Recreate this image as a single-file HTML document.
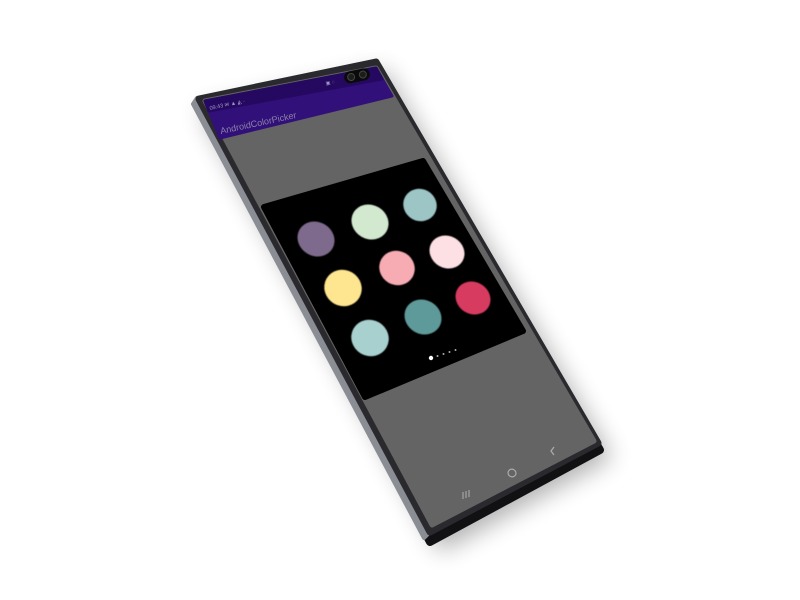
<!DOCTYPE html>
<html><head><meta charset="utf-8"><style>
html,body{margin:0;padding:0;background:#fff;width:800px;height:600px;overflow:hidden}
svg{display:block}
text{font-family:"Liberation Sans",sans-serif}
</style></head><body>
<svg width="800" height="600" viewBox="0 0 800 600" xmlns="http://www.w3.org/2000/svg">
<defs>
<filter id="sh" x="-30%" y="-30%" width="160%" height="160%"><feGaussianBlur stdDeviation="12"/></filter>
<filter id="b1"><feGaussianBlur stdDeviation="0.5"/></filter>
</defs>
<path d="M200,110 L385,70 L612,458 L440,552 Z" fill="#000" opacity="0.3" filter="url(#sh)"/>
<!-- body bottom thickness -->
<path d="M196,104 L376,64 L600,450 L430,542 Z" fill="#111113" stroke="#111113" stroke-width="8" stroke-linejoin="round"/>
<!-- side silver -->
<path d="M193,104 L197,98 L428,534 L424,538 Z" fill="#8a8d93" stroke="#8a8d93" stroke-width="4" stroke-linejoin="round"/>
<!-- front frame -->
<path d="M199,99 L376,62 L598,443 L430,532 Z" fill="#2a2a2e" stroke="#2a2a2e" stroke-width="7" stroke-linejoin="round"/>
<!-- screen -->
<path d="M205,101 L376,68 L594,441 L432,525 Z" fill="#646464" stroke="#646464" stroke-width="5" stroke-linejoin="round"/>
<!-- app bar -->
<path d="M205,101 L376,68 L392,96 L220,138 Z" fill="#32107a" stroke="#32107a" stroke-width="3" stroke-linejoin="round"/>
<path d="M205,101 L376,68 L382,79 L209,111 Z" fill="#250860" stroke="#250860" stroke-width="3" stroke-linejoin="round"/>
<g transform="rotate(-12 356 76)">
<rect x="344" y="70" width="26" height="12" rx="6" fill="#0a0a0a"/>
<circle cx="351" cy="76" r="3.5" fill="#1c1c1c" stroke="#444" stroke-width="1"/>
<circle cx="363" cy="76" r="3.5" fill="#1c1c1c" stroke="#444" stroke-width="1"/>
</g>
<text x="210" y="110" font-size="5.5" fill="#a098c0" transform="rotate(-12 210 110)">09:43 ✉ ▲ ◭ ·</text>
<text x="326" y="85" font-size="5" fill="#a098c0" transform="rotate(-12 326 85)">▣ ◌</text>
<text x="221" y="134" font-size="9" fill="#8c82a8" transform="rotate(-12 221 134)">AndroidColorPicker</text>
<!-- card -->
<path d="M264,207 L423,161 L523,331 L365,397 Z" fill="#000" stroke="#000" stroke-width="6" stroke-linejoin="round"/>
<g filter="url(#b1)">
<ellipse cx="316" cy="239" rx="19" ry="17" transform="rotate(30 316 239)" fill="#7e6a8c"/>
<ellipse cx="370" cy="222" rx="19" ry="17" transform="rotate(30 370 222)" fill="#d2e9d0"/>
<ellipse cx="420" cy="205" rx="17" ry="16" transform="rotate(30 420 205)" fill="#9dc5c6"/>
<ellipse cx="343" cy="288" rx="19" ry="18" transform="rotate(30 343 288)" fill="#fde68f"/>
<ellipse cx="397" cy="268" rx="18" ry="17" transform="rotate(30 397 268)" fill="#f7acb3"/>
<ellipse cx="447" cy="252" rx="18" ry="16" transform="rotate(30 447 252)" fill="#fde0e3"/>
<ellipse cx="473" cy="298" rx="18" ry="16" transform="rotate(30 473 298)" fill="#d83a60"/>
<ellipse cx="423" cy="317" rx="19" ry="17" transform="rotate(30 423 317)" fill="#5f9a9b"/>
<ellipse cx="370" cy="338" rx="19" ry="18" transform="rotate(30 370 338)" fill="#a7d0cf"/>
</g>
<circle cx="431" cy="358" r="2.2" fill="#fff"/>
<circle cx="437.5" cy="356" r="1" fill="#aaa"/>
<circle cx="443.5" cy="354" r="1" fill="#aaa"/>
<circle cx="449.5" cy="352" r="1" fill="#aaa"/>
<circle cx="455.5" cy="350" r="1" fill="#aaa"/>
<path d="M554,447 L551,451 L554,455" fill="none" stroke="#aaa" stroke-width="1.3"/>
<ellipse cx="512" cy="473" rx="4" ry="3.8" transform="rotate(30 512 473)" fill="none" stroke="#aaa" stroke-width="1.2"/>
<g stroke="#aaa" stroke-width="1.1"><line x1="463" y1="492" x2="463" y2="499"/><line x1="466" y1="491" x2="466" y2="498"/><line x1="469" y1="490" x2="469" y2="497"/></g>
</svg>
</body></html>
